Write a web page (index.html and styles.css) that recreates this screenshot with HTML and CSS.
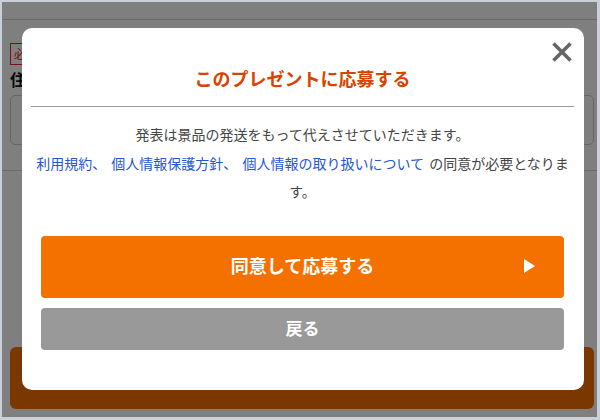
FILE: index.html
```html
<!DOCTYPE html>
<html lang="ja">
<head>
<meta charset="utf-8">
<title>応募</title>
<link rel="stylesheet" href="styles.css">
</head>
<body>
<div class="page">
  <div class="page-header"></div>
  <div class="form">
    <span class="required">必須</span>
    <div class="field-label">住所</div>
    <div class="field-input">〒</div>
  </div>
  <div class="page-rule"></div>
  <div class="page-actions">
    <div class="page-submit"></div>
  </div>

  <div class="overlay"></div>

  <div class="modal">
    <button class="close" aria-label="閉じる">
      <svg width="22" height="22" viewBox="0 0 22 22"><path d="M2.5 2.5 L19.5 19.5 M19.5 2.5 L2.5 19.5" stroke="#666" stroke-width="3.6" stroke-linecap="butt" fill="none"/></svg>
    </button>
    <h2 class="modal-title">このプレゼントに応募する</h2>
    <hr class="modal-rule">
    <p class="modal-text">発表は景品の発送をもって代えさせていただきます。<br><a href="#">利用規約、</a> <a href="#">個人情報保護方針、</a> <a href="#">個人情報の取り扱いについて</a> の同意が必要となります。</p>
    <div class="modal-actions">
      <button class="btn btn-primary"><span class="btn-label">同意して応募する</span><svg class="btn-arrow" width="11" height="14" viewBox="0 0 11 14"><polygon points="0,0 11,7 0,14" fill="#fff"/></svg></button>
      <button class="btn btn-back">戻る</button>
    </div>
  </div>
</div>
</body>
</html>
```

FILE: styles.css
```css
html, body {
  margin: 0;
  padding: 0;
}
body {
  background: #c9d0d8;
  padding: 2px 3px 3px 2px;
  font-family: "Noto Sans CJK JP", "Noto Sans", sans-serif;
  color: #444;
}
.page {
  position: relative;
  width: 595px;
  height: 415px;
  background: #fff;
  overflow: hidden;
}
.page-header {
  height: 17px;
  border-bottom: 1px solid #d6d6d6;
}
.form {
  padding: 20px 3px 0 8px;
}
.required {
  display: inline-block;
  border: 1px solid #f02020;
  color: #f02020;
  font-size: 12px;
  line-height: 20px;
  padding: 0 3px;
}
.field-label {
  font-weight: bold;
  font-size: 16px;
  line-height: 22px;
  margin-top: 3px;
  color: #111;
}
.field-input {
  margin-top: 5px;
  height: 48px;
  border: 1px solid #ccc;
  border-radius: 5px;
  background: #fcfcfc;
  font-size: 12px;
  line-height: 48px;
  padding-left: 10px;
  color: #c08060;
}
.page-rule {
  margin-top: 25px;
  border-top: 1px solid #d6d6d6;
}
.page-actions {
  padding: 176px 3px 0 8px;
}
.page-submit {
  height: 62px;
  border-radius: 6px;
  background: #f47100;
}
.overlay {
  position: absolute;
  inset: 0;
  background: rgba(0, 0, 0, 0.5);
}
.modal {
  position: absolute;
  left: 20px;
  top: 26px;
  width: 562px;
  height: 362px;
  box-sizing: border-box;
  background: #fff;
  border-radius: 10px;
  padding: 37px 10px 0 9px;
}
.close {
  position: absolute;
  top: 13px;
  right: 11px;
  width: 22px;
  height: 22px;
  padding: 0;
  border: 0;
  background: none;
  display: block;
}
.close svg {
  display: block;
}
.modal-title {
  margin: 0;
  text-align: center;
  font-size: 18px;
  line-height: 26px;
  font-weight: bold;
  color: #d84400;
}
.modal-rule {
  margin: 15px 0 0;
  border: 0;
  border-top: 1px solid #9a9a9a;
  height: 0;
}
.modal-text {
  margin: 13px 0 0;
  text-align: center;
  font-size: 14px;
  line-height: 28.5px;
  color: #444;
  word-spacing: 2px;
}
.modal-text a {
  color: #2456d6;
  text-decoration: none;
}
.modal-actions {
  margin: 30px 10px 0;
  display: flex;
  flex-direction: column;
  gap: 10px;
}
.btn {
  border: 0;
  border-radius: 4px;
  color: #fff;
  font-family: inherit;
  font-weight: bold;
  padding: 0;
  width: 100%;
}
.btn-primary {
  height: 62px;
  background: #f47100;
  font-size: 18px;
  display: grid;
  grid-template-columns: 1fr auto 1fr;
  align-items: center;
}
.btn-label {
  grid-column: 2;
  margin-bottom: 4px;
}
.btn-arrow {
  grid-column: 3;
  justify-self: end;
  margin-right: 29px;
  margin-bottom: 1px;
  display: block;
}
.btn-back {
  height: 42px;
  background: #999;
  font-size: 17px;
  padding-bottom: 3px;
}
```
